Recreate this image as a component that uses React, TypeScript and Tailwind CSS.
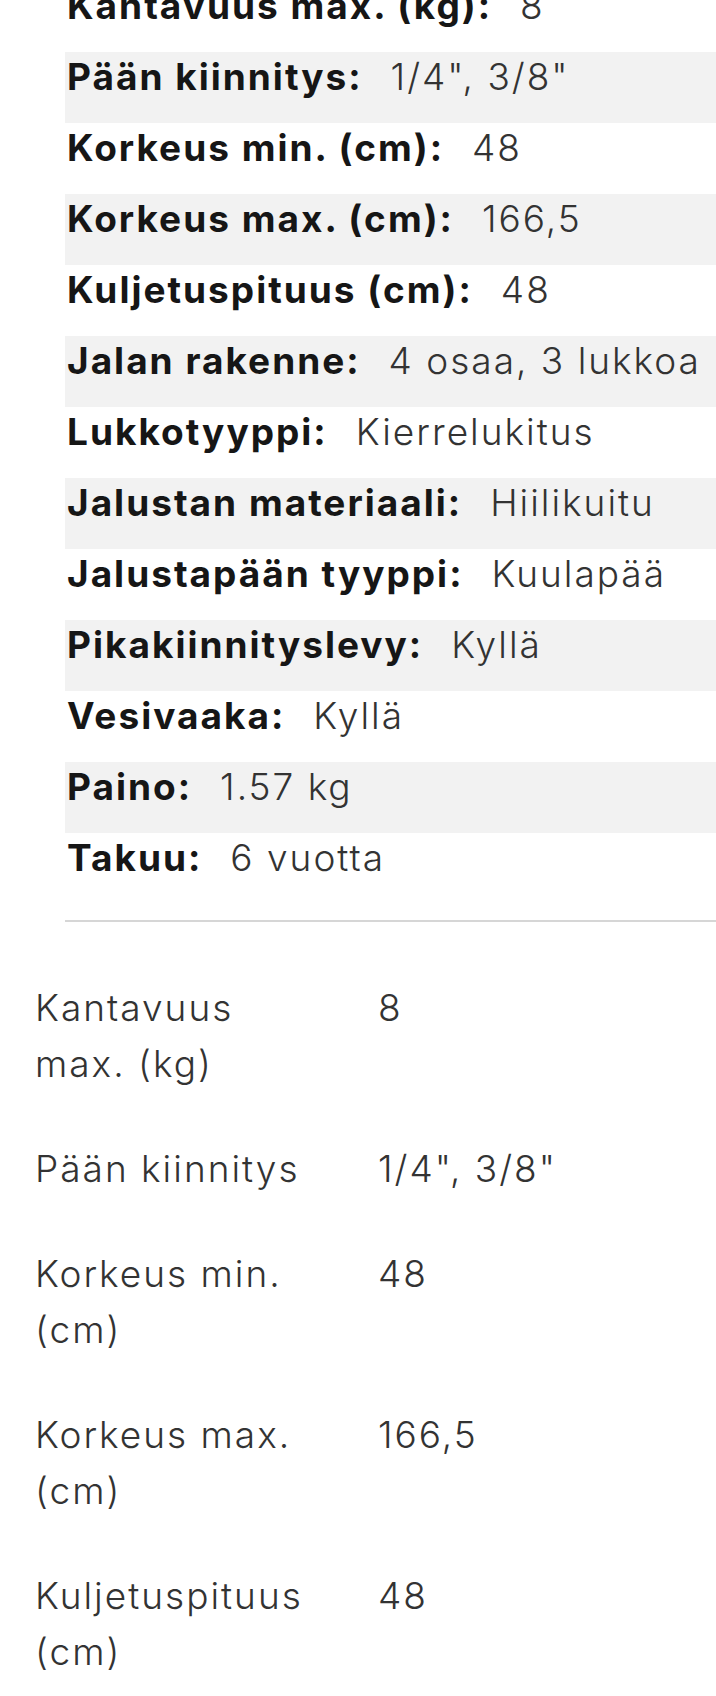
import React from 'react';

const specs: { label: string; value: string }[] = [
    { label: 'Kantavuus max. (kg)', value: '8' },
    { label: 'Pään kiinnitys', value: '1/4", 3/8"' },
    { label: 'Korkeus min. (cm)', value: '48' },
    { label: 'Korkeus max. (cm)', value: '166,5' },
    { label: 'Kuljetuspituus (cm)', value: '48' },
    { label: 'Jalan rakenne', value: '4 osaa, 3 lukkoa' },
    { label: 'Lukkotyyppi', value: 'Kierrelukitus' },
    { label: 'Jalustan materiaali', value: 'Hiilikuitu' },
    { label: 'Jalustapään tyyppi', value: 'Kuulapää' },
    { label: 'Pikakiinnityslevy', value: 'Kyllä' },
    { label: 'Vesivaaka', value: 'Kyllä' },
    { label: 'Paino', value: '1.57 kg' },
    { label: 'Takuu', value: '6 vuotta' },
];

// the table below only shows the first few rows before the crop
const tableRows = specs.slice(0, 5);

export default function App() {
    return (
        <div className="h-[1696px] overflow-hidden bg-white font-['Inter',sans-serif] text-[37px] tracking-[2px]">
            <div className="-mt-[19px]">
                <ul className="pl-[65px]">
                    {specs.map((s, i) => (
                        <li
                            key={s.label}
                            className={`h-[71px] pt-[2px] pl-[2px] leading-[45px] whitespace-nowrap ${i % 2 === 1 ? 'bg-[#f2f2f2]' : ''}`}
                        >
                            <span className="font-bold text-[#161616]">{s.label}:</span>
                            <span className="ml-[28px] font-light text-[#333333]">{s.value}</span>
                        </li>
                    ))}
                </ul>
                <div className="ml-[65px] mt-[16px] h-[2px] bg-[#d6d6d6]" />

                <div className="mt-[33px] pl-[35px] font-light text-[#333333] leading-[56px]">
                    {tableRows.map((s) => (
                        <div key={s.label} className="grid grid-cols-[343px_1fr] py-[24.5px]">
                            <div className="w-[290px]">{s.label}</div>
                            <div>{s.value}</div>
                        </div>
                    ))}
                </div>
            </div>
        </div>
    );
}
